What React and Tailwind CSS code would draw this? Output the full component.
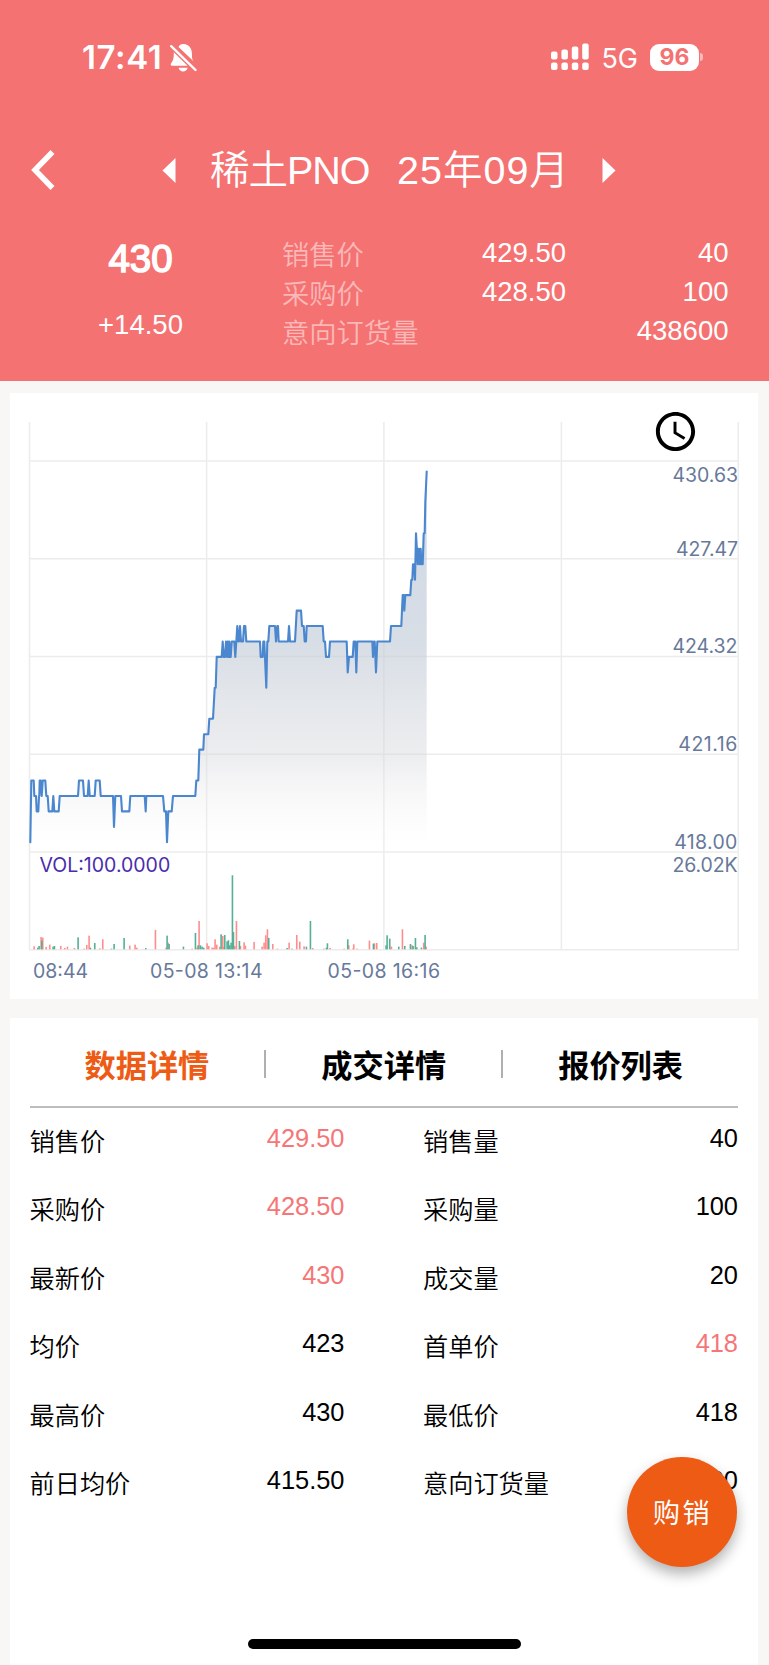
import { MdAccessTime } from "react-icons/md";

const PLOT_LEFT = 20;
const BASE_PRICE = 418;

// [from, to, price] - plateaus of the price line, three ticks per pixel
const prices = [
   [1, 1, 418], [4, 11, 420], [13, 18, 419.5], [20, 25, 419], [27, 28, 419.5],
   [29, 32, 420], [35, 35, 419.5], [38, 46, 420], [49, 53, 419.5], [56, 67, 419],
   [70, 70, 419.5], [73, 86, 419], [89, 144, 419.5], [147, 159, 420], [162, 173, 419.5],
   [176, 176, 420], [179, 194, 419.5], [197, 209, 420], [212, 249, 419.5], [252, 252, 418.5],
   [256, 273, 419.5], [276, 298, 419], [301, 344, 419.5], [347, 347, 419], [349, 399, 419.5],
   [403, 408, 419], [411, 411, 418], [415, 425, 419], [429, 496, 419.5], [499, 505, 420],
   [508, 508, 421], [510, 520, 421], [522, 535, 421.5], [538, 549, 422], [554, 557, 423],
   [560, 575, 424],
   [578, 578, 424.5], [581, 585, 424], [588, 588, 424.5], [591, 591, 424], [593, 594, 424.5],
   [596, 596, 424], [598, 598, 424.5], [600, 602, 424], [605, 613, 424.5], [616, 616, 424],
   [619, 619, 424.5], [622, 622, 425], [625, 627, 424.5], [630, 630, 425], [633, 639, 424.5],
   [642, 646, 425], [649, 690, 424.5], [692, 698, 424], [700, 703, 424.5], [709, 709, 423],
   [712, 715, 424.5], [718, 735, 425], [738, 738, 424.5], [742, 744, 425], [746, 774, 424.5],
   [777, 777, 425], [780, 795, 424.5], [800, 813, 425.5], [816, 821, 425], [824, 828, 424.5],
   [830, 878, 425], [881, 885, 424.5], [888, 897, 424], [900, 950, 424.5], [953, 953, 423.5],
   [957, 968, 424], [971, 976, 424.5], [979, 979, 423.5], [982, 1027, 424.5], [1029, 1029, 424],
   [1032, 1034, 424.5], [1038, 1038, 423.5], [1042, 1080, 424.5], [1083, 1114, 425],
   [1118, 1121, 426], [1123, 1123, 425.5], [1126, 1141, 426], [1144, 1147, 426.5],
   [1149, 1152, 427], [1155, 1155, 426.5], [1158, 1158, 428], [1163, 1163, 427],
   [1165, 1166, 427.5], [1169, 1169, 427], [1171, 1172, 427.5], [1174, 1178, 427],
   [1181, 1184, 428], [1186, 1186, 429], [1190, 1190, 430],
];

// [tick, height] - deals on the buying side
const volumeUp = [
   [12, 9], [33, 37], [38, 35], [48, 7], [59, 14], [92, 10], [104, 4], [112, 8], [133, 4],
   [162, 2], [170, 13], [177, 41], [209, 3], [218, 30], [299, 11], [315, 14], [320, 5],
   [376, 58], [408, 5], [414, 20], [486, 2], [501, 5], [507, 85], [531, 18], [536, 10],
   [546, 5], [551, 5], [555, 30], [560, 14], [569, 8], [578, 40], [581, 8], [614, 10],
   [619, 85], [631, 10], [642, 21], [646, 11], [672, 22], [696, 8], [702, 20], [707, 42],
   [712, 60], [728, 16], [742, 2], [777, 20], [800, 43], [809, 23], [822, 9], [848, 4],
   [881, 2], [900, 4], [942, 2], [956, 12], [969, 3], [971, 15], [981, 2], [1018, 26],
   [1033, 18], [1040, 19], [1084, 8], [1117, 60], [1146, 12], [1181, 20], [1188, 8],
];

const volumeDown = [
   [23, 5], [27, 10], [35, 26], [69, 8], [73, 10], [144, 36], [181, 5], [194, 19], [244, 2],
   [252, 16], [282, 34], [347, 4], [411, 41], [417, 16], [460, 8], [496, 49], [504, 12],
   [511, 12], [516, 8], [521, 5], [573, 45], [584, 43], [591, 24], [595, 27], [599, 12],
   [603, 20], [607, 222], [610, 52], [628, 25], [716, 34], [771, 4], [786, 2], [829, 8],
   [841, 85], [889, 5], [892, 18], [953, 30], [1030, 17], [1068, 12], [1071, 42],
   [1079, 32], [1106, 8], [1124, 10], [1141, 16], [1149, 10], [1156, 34], [1160, 6],
   [1174, 5], [1185, 43],
];

// [label, x, y, width]
const priceLabels = [
   ["430.63", 662.5, 88.5, 65.5],
   ["427.47", 666, 162.5, 62],
   ["424.32", 662.5, 260, 65],
   ["421.16", 668.3, 358, 59],
   ["418.00", 664.3, 455.5, 63],
   ["26.02K", 662.5, 478.5, 65],
];

const rows = [
   ["销售价", "429.50", true, "销售量", "40", false],
   ["采购价", "428.50", true, "采购量", "100", false],
   ["最新价", "430", true, "成交量", "20", false],
   ["均价", "423", false, "首单价", "418", true],
   ["最高价", "430", false, "最低价", "418", false],
   ["前日均价", "415.50", false, "意向订货量", "438600", false],
];

const tabs = ["数据详情", "成交详情", "报价列表"];

const toX = (tick) => PLOT_LEFT + tick / 3;
const toY = (price) => 449.3 - (price - BASE_PRICE) * 30.9;

const StatusBar = () => (
   <div className="flex h-[114px] items-center pl-[82px] pr-[66px] font-['Inter',sans-serif]">
      <span className="pt-[1px] text-[33px] leading-none font-semibold tracking-[0.6px]">17:41</span>
      <svg className="ml-[7px] h-[29px] w-[28px]" viewBox="0 0 28 29" fill="white">
         <path d="M9.500 4C10.300 2 11.800 1 14 1c3.600 0 6.500 1.800 8 5 1 2.500 1 5 1 8 0 1.800.8 3.200 1.800 4.500z" />
         <path d="M4.800 9.300 18.600 22.800H3c-1.300 0-1.700-1.200-1-2.200 2-2.800 2.900-4.600 2.800-11.300z" />
         <path d="M9.600 24.800h9c-.6 2.500-2.400 3.800-4.500 3.800s-3.900-1.300-4.500-3.800z" />
         <path d="M2.200 3.200 26.500 27" stroke="white" strokeWidth="2.400" strokeLinecap="round" />
      </svg>
      <svg className="ml-auto h-7 w-[38px]" viewBox="0 0 38 28" fill="white">
         <rect x="0" y="8.500" width="6.500" height="8" rx="2" />
         <rect x="10.400" y="6.500" width="6.500" height="10" rx="2" />
         <rect x="20.800" y="3.500" width="6.500" height="13" rx="2" />
         <rect x="31.200" y="0.500" width="6.500" height="16" rx="2" />
         <rect x="0" y="19.500" width="6.500" height="7.500" rx="2" />
         <rect x="10.400" y="19.500" width="6.500" height="7.500" rx="2" />
         <rect x="20.800" y="19.500" width="6.500" height="7.500" rx="2" />
         <rect x="31.200" y="19.500" width="6.500" height="7.500" rx="2" />
      </svg>
      <span className="ml-[12px] pt-[2px] text-[27px] leading-none">5G</span>
      <div className="ml-[12px] flex h-[27px] w-[49px] items-center justify-center rounded-[9px] bg-white text-[23px] leading-none font-bold text-[#f57272]">
         96
      </div>
      <div className="ml-[1px] h-[8px] w-[3px] rounded-r-full bg-white/50" />
   </div>
);

const TitleBar = () => (
   <div className="flex h-[112px] items-center pl-[31px]">
      <svg className="h-[40px] w-[24px]" viewBox="0 0 24 40" fill="none" stroke="white" strokeWidth="5.500">
         <path d="M21.500 2 4 20 21.500 38" />
      </svg>
      <svg className="ml-[107px] h-[25px] w-[14px]" viewBox="0 0 14 25" fill="white">
         <path d="M13.500 0v25L.5 12.500z" />
      </svg>
      <span className="ml-[34px] w-[161px] pt-[1px] text-[39.5px] leading-none font-[350] tracking-[-1px] whitespace-nowrap">
         稀土PNO
      </span>
      <span className="ml-[26px] w-[168px] pt-[1px] text-[39.5px] leading-none font-[350] tracking-[1px] whitespace-nowrap">
         25年09月
      </span>
      <svg className="ml-[37px] h-[25px] w-[14px]" viewBox="0 0 14 25" fill="white">
         <path d="M.5 0v25l13-12.500z" />
      </svg>
   </div>
);

const Summary = () => (
   <div className="flex h-[155px] pt-[7px] text-[27.5px]">
      <div className="w-[281px] text-center">
         <div className="h-[52px] text-[38.5px] leading-[52px] [-webkit-text-stroke:1.5px_white]">
            430
         </div>
         <div className="mt-[28px] leading-[24px]">+14.50</div>
      </div>
      <div className="w-[160px] pt-[3px] pl-[1px] text-[27.3px] leading-[39px] font-[350] text-white/50">
         <div>销售价</div>
         <div>采购价</div>
         <div>意向订货量</div>
      </div>
      <div className="w-[125px] text-right leading-[39px]">
         <div>429.50</div>
         <div>428.50</div>
      </div>
      <div className="w-[162.500px] text-right leading-[39px]">
         <div>40</div>
         <div>100</div>
         <div>438600</div>
      </div>
   </div>
);

const Chart = () => {
   const points = prices.flatMap(([from, to, price]) => [
      `${toX(from).toFixed(1)},${toY(price).toFixed(1)}`,
      `${toX(to).toFixed(1)},${toY(price).toFixed(1)}`,
   ]);
   const line = `M${points.join(" ")}`;

   return (
      <svg
         className="block h-[606px] w-[748px] font-['Inter',sans-serif]"
         viewBox="0 0 748 606"
         fontSize="19.500"
      >
         <defs>
            <linearGradient id="area" gradientUnits="userSpaceOnUse" x1="0" y1="78" x2="0" y2="459">
               <stop offset="0" stopColor="#b6c6dc" stopOpacity="0.700" />
               <stop offset="0.450" stopColor="#c3ccd8" stopOpacity="0.650" />
               <stop offset="0.750" stopColor="#d6d8dc" stopOpacity="0.450" />
               <stop offset="1" stopColor="#ffffff" stopOpacity="0.100" />
            </linearGradient>
         </defs>
         <g stroke="#ececec" strokeWidth="1.500">
            {[19.5, 196.6, 373.9, 551.4, 728.3].map((x) => (
               <line key={x} x1={x} x2={x} y1="29" y2="557" />
            ))}
            {[68, 165.7, 263.4, 361.2, 459, 556.7].map((y) => (
               <line key={y} x1="19" x2="729" y1={y} y2={y} />
            ))}
         </g>
         <path d={`${line} L${toX(1190)},459 L${toX(1)},459Z`} fill="url(#area)" />
         <path
            d={line}
            fill="none"
            stroke="#4b87cf"
            strokeWidth="2.100"
            strokeLinejoin="round"
            strokeLinecap="round"
         />
         <g fill="#ff8d8d">
            {volumeUp.map(([tick, size]) => (
               <rect key={tick} x={toX(tick) - 0.7} y={556.3 - size / 3} width="1.600" height={size / 3} />
            ))}
         </g>
         <g fill="#55b095">
            {volumeDown.map(([tick, size]) => (
               <rect key={tick} x={toX(tick) - 0.7} y={556.3 - size / 3} width="1.600" height={size / 3} />
            ))}
         </g>
         <g fill="#67799a">
            {priceLabels.map(([label, x, y, width]) => (
               <text key={label} x={x} y={y} textLength={width}>
                  {label}
               </text>
            ))}
         </g>
         <text x="29.500" y="478.500" fill="#4a2cae">
            VOL:100.0000
         </text>
         <g fill="#67799a">
            <text x="23" y="584.500">08:44</text>
            <text x="140" y="584.500" textLength="112.500">05-08 13:14</text>
            <text x="317.500" y="584.500" textLength="112.500">05-08 16:16</text>
         </g>
      </svg>
   );
};

const Cell = ({ label, value, up }) => (
   <div className="flex h-[68.4px] w-[315px] justify-between">
      <span className="pt-[4px] text-[25.2px] leading-[60px] font-[350]">{label}</span>
      <span className={`text-[25.4px] leading-[60px] ${up ? "text-[#f57676]" : ""}`}>{value}</span>
   </div>
);

const App = () => {
   return (
      <div className="flex h-[1665px] w-[769px] flex-col overflow-hidden bg-[#f8f7f5] font-['Liberation_Sans','Noto_Sans_CJK_SC',sans-serif] text-black">
         <header className="h-[381px] shrink-0 bg-[#f57272] text-white">
            <StatusBar />
            <TitleBar />
            <Summary />
         </header>

         <section className="relative mt-[12px] mr-[11px] ml-[10px] h-[606px] shrink-0 bg-white">
            <Chart />
            <MdAccessTime className="absolute top-[15px] left-[641.500px] size-[47px]" />
         </section>

         <section className="mt-[19px] mr-[11px] ml-[10px] grow bg-white pr-[20px] pl-[19.5px]">
            <div className="flex h-[90px] items-center border-b-2 border-[#bdbdbd] pt-[4px]">
               {tabs.map((tab, i) => (
                  <div
                     key={tab}
                     className={`flex h-7 flex-1 items-center justify-center pt-[5px] text-[31.2px] leading-none font-bold ${
                        i === 0 ? "text-[#ed5b14]" : "border-l-2 border-l-[#b0b0b0] text-black"
                     }`}
                  >
                     {tab}
                  </div>
               ))}
            </div>
            {rows.map(([label, value, up, label2, value2, up2]) => (
               <div key={label} className="flex justify-between">
                  <Cell label={label} value={value} up={up} />
                  <Cell label={label2} value={value2} up={up2} />
               </div>
            ))}
         </section>

         <button className="absolute top-[1457px] left-[627px] size-[110px] rounded-full bg-[#ed5b14] pt-[4px] pl-[1px] text-[27px] tracking-[2.5px] text-white shadow-[0_7px_14px_rgba(0,0,0,0.3)]">
            购销
         </button>
         <div className="absolute top-[1639px] left-[248px] h-[10px] w-[273px] rounded-full bg-black" />
      </div>
   );
};

export default App;
